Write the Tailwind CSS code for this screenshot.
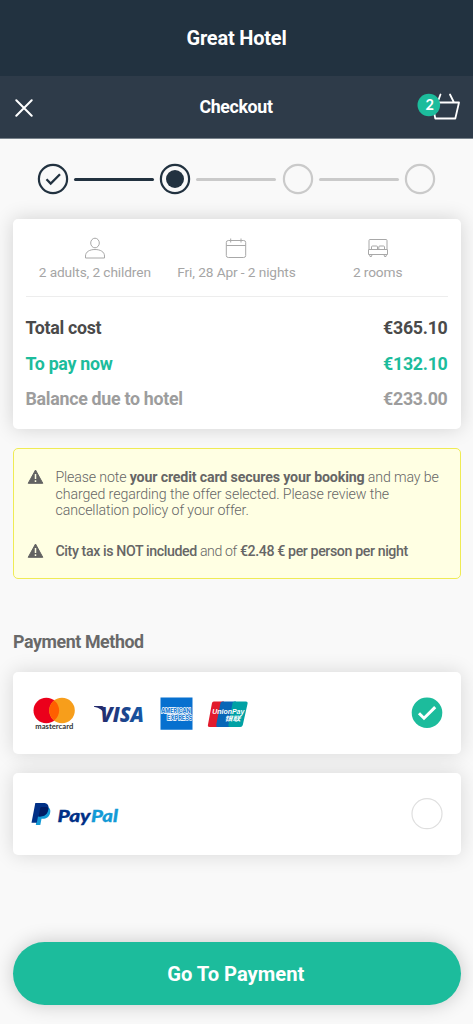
<!DOCTYPE html>
<html lang="en">
<head>
<meta charset="utf-8">
<meta name="viewport" content="width=device-width, initial-scale=1">
<title>Checkout</title>
<script src="https://cdn.jsdelivr.net/npm/@tailwindcss/browser@4"></script>
</head>
<body class="w-[473px] h-[1024px] overflow-hidden bg-[#f9f9f9] font-['Roboto',sans-serif] text-[#4a4a4a] flex flex-col">
<header class="h-[76px] shrink-0 bg-[#223240] flex items-center justify-center text-white font-bold text-[20px] tracking-[-0.2px]"><h1>Great Hotel</h1></header>
<nav class="h-[63px] shrink-0 bg-[#2e3b49] border-b border-[#78828b] flex items-center justify-between pl-[15px] pr-[13px] text-white">
  <svg class="w-[44px] h-[20px]" viewBox="0 0 44 20" fill="none" stroke="#fff" stroke-width="2" stroke-linecap="round"><path d="M1.3 3.3 16.7 18.7M16.7 3.3 1.3 18.7"/></svg>
  <h2 class="font-bold text-[17.8px] tracking-[-0.35px] pt-[1px] pr-[3px]">Checkout</h2>
  <svg class="w-[44px] h-[28px]" viewBox="0 0 44 28" fill="none"><path d="M20 9.5H43L39.3 25.5H19.3L16 9.5M24.5 1.5 21.5 9.5M34 1.5 38 9.5" stroke="#fff" stroke-width="1.8" stroke-linejoin="round" stroke-linecap="round"/><circle cx="12.8" cy="12" r="11.3" fill="#1cbc9c"/><text x="13.8" y="17.1" text-anchor="middle" fill="#fff" font-family="Lato" font-weight="700" font-size="14.5">2</text></svg>
</nav>
<main class="flex flex-col pl-[13px] pr-[12.5px]">
  <div class="flex items-center justify-between h-[32px] mt-[24px] pl-[23.5px] pr-[24.5px]">
    <svg class="size-[32px]" viewBox="0 0 32 32" fill="none" stroke="#223240" stroke-width="2.2"><circle cx="16" cy="16" r="14.1"/><path d="m9.5 16.2 4.2 4.3 9.3-9.3" stroke-width="2.3"/></svg>
    <div class="w-[80px] h-[3px] rounded-full bg-[#223240]"></div>
    <svg class="size-[32px]" viewBox="0 0 32 32" fill="none" stroke="#223240" stroke-width="2.2"><circle cx="16" cy="16" r="14.1"/><circle cx="16" cy="16" r="9" fill="#223240" stroke="none"/></svg>
    <div class="w-[80px] h-[3px] rounded-full bg-[#cacaca]"></div>
    <svg class="size-[32px]" viewBox="0 0 32 32" fill="none" stroke="#cacaca" stroke-width="2.2"><circle cx="16" cy="16" r="14.1"/></svg>
    <div class="w-[80px] h-[3px] rounded-full bg-[#cacaca]"></div>
    <svg class="size-[32px]" viewBox="0 0 32 32" fill="none" stroke="#cacaca" stroke-width="2.2"><circle cx="16" cy="16" r="14.1"/></svg>
  </div>
  <section class="mt-[24px] h-[210px] rounded-[5px] bg-white shadow-[0_0_20px_rgba(0,0,0,0.16)] pl-[12.5px] pr-[13px]">
    <div class="grid grid-cols-3 h-[78px] pt-[18px] border-b border-[#ededed] text-[13.7px] leading-[16px] tracking-[-0.11px] text-[#a5a5a5] whitespace-nowrap">
      <div class="flex flex-col items-center gap-[5px] pr-[2px]">
        <svg class="w-[22px] h-[22px]" viewBox="0 0 22 22" fill="none" stroke="#a8a8a8" stroke-width="1"><ellipse cx="11" cy="6" rx="4.3" ry="4.8"/><path d="M1.5 21V19C1.5 14.8 5.7 12.5 11 12.5S20.5 14.8 20.5 19V21Z"/></svg>
        <span>2 adults, 2 children</span>
      </div>
      <div class="flex flex-col items-center gap-[5px]">
        <svg class="w-[22px] h-[22px]" viewBox="0 0 22 22" fill="none" stroke="#a8a8a8" stroke-width="1"><rect x="1.3" y="3.5" width="19.4" height="17" rx="2"/><path d="M1.3 8.5H20.7M5.7 1.5V5.5M16 1.5V5.5"/></svg>
        <span>Fri, 28 Apr - 2 nights</span>
      </div>
      <div class="flex flex-col items-center gap-[5px] pl-[1px]">
        <svg class="w-[22px] h-[22px]" viewBox="0 0 22 22" fill="none" stroke="#a8a8a8" stroke-width="1"><path d="M2 12V3.5Q2 2.5 3 2.5H19Q20 2.5 20 3.5V12M1.5 12.5H20.5V17.5H1.5ZM4.5 12.5V10Q4.5 9 5.5 9H9.5Q10.5 9 10.5 10V12.5M11.8 12.5V10Q11.8 9 12.8 9H16.5Q17.5 9 17.5 10V12.5M2.5 17.5 3 19.5H4.5L5 17.5M17 17.5 17.5 19.5H19L19.5 17.5"/></svg>
        <span>2 rooms</span>
      </div>
    </div>
    <dl class="pt-[13.2px] text-[17.8px] leading-[35.4px] tracking-[-0.28px] font-bold">
      <div class="flex justify-between"><dt>Total cost</dt><dd>€365.10</dd></div>
      <div class="flex justify-between text-[#1cbc9c]"><dt>To pay now</dt><dd>€132.10</dd></div>
      <div class="flex justify-between text-[#9d9d9d]"><dt>Balance due to hotel</dt><dd>€233.00</dd></div>
    </dl>
  </section>
  <section class="mt-[19px] h-[131px] rounded-[5px] border-[1.5px] border-[#efeb55] bg-[#ffffe3] pl-[12.5px] pt-[20px] text-[14.2px] leading-[16.5px] text-[#666] whitespace-nowrap">
    <div class="flex gap-[12px]">
      <svg class="w-[17px] h-[16px] shrink-0" viewBox="0 0 17 16"><path d="M8.5 1 15.8 14.3H1.2Z" fill="#626262" stroke="#626262" stroke-linejoin="round"/><path d="M8.5 5V10M8.5 11.3V13" stroke="#ffffe3" stroke-width="1.5"/></svg>
      <p class="font-light tracking-[-0.1px]"><span class="tracking-[-0.15px]">Please note <b class="font-bold">your credit card secures your booking</b> and may be</span><br>charged regarding the offer selected. Please review the<br>cancellation policy of your offer.</p>
    </div>
    <div class="flex gap-[12px] mt-[24.5px]">
      <svg class="w-[17px] h-[16px] shrink-0" viewBox="0 0 17 16"><path d="M8.5 1 15.8 14.3H1.2Z" fill="#626262" stroke="#626262" stroke-linejoin="round"/><path d="M8.5 5V10M8.5 11.3V13" stroke="#ffffe3" stroke-width="1.5"/></svg>
      <p class="font-light tracking-[-0.4px]"><b class="font-medium">City tax is NOT included</b> and of <b class="font-medium">€2.48 € per person per night</b></p>
    </div>
  </section>
  <h3 class="mt-[52px] h-[22px] leading-[22px] text-[17.8px] tracking-[-0.4px] font-bold text-[#696969]">Payment Method</h3>
  <div class="mt-[19px] h-[82px] rounded-[5px] bg-white shadow-[0_0_20px_rgba(0,0,0,0.14)] flex items-center justify-between pl-[17px] pr-[18px]">
    <svg class="w-[220px] h-[38px]" viewBox="30 694 220 38">
      <defs><linearGradient id="visa"><stop stop-color="#242b6c"/><stop offset="1" stop-color="#1559a7"/></linearGradient><clipPath id="amex"><path d="M160.5 697.5H192.5V729.7H160.5Z"/></clipPath></defs>
      <circle cx="46.3" cy="710.5" r="12.8" fill="#eb001b"/><circle cx="62" cy="710.5" r="12.8" fill="#f79e1b"/><path d="M54.2 700.4A12.8 12.8 0 0 1 54.2 720.6A12.8 12.8 0 0 1 54.2 700.4" fill="#ff5f00"/>
      <text x="35.3" y="729" font-family="Lato" font-weight="700" font-size="6.8" fill="#333" textLength="38" lengthAdjust="spacingAndGlyphs">mastercard</text>
      <path d="M94 706H102Q103.5 706 103.9 707.5L105.5 715.2Q102 708 94 706.7Z" fill="#242b6c"/>
      <text x="100.5" y="721.5" font-family="Open Sans" font-weight="800" font-style="italic" font-size="21.8" fill="url(#visa)" textLength="43.5" lengthAdjust="spacingAndGlyphs">VISA</text>
      <path d="M160.5 697.5H192.5V729.7H160.5Z" fill="#0770cf"/>
      <g clip-path="url(#amex)" font-family="Inter" font-weight="700" font-size="6.1" fill="#0770cf" stroke="#fff" stroke-width="1.3" paint-order="stroke"><text x="161.2" y="713" textLength="29.5" lengthAdjust="spacingAndGlyphs">AMERICAN</text><text x="167" y="720.4" textLength="25.5" lengthAdjust="spacingAndGlyphs">EXPRESS</text></g>
      <path d="M213.8 701.5H224L218 727H209.5Q207.4 727 208 724.5L212 703Q212.3 701.5 213.8 701.5Z" fill="#e21b2d"/><path d="M222.5 701.5H236L230 727H217.5Q215.8 727 216.3 724.5L220.5 703Q220.8 701.5 222.5 701.5Z" fill="#0867b7"/><path d="M234.5 701.5H246Q248 701.5 247.6 703.5L242.8 725Q242.3 727 240.3 727H230Q228 727 228.5 724.5L232.5 703Q232.8 701.5 234.5 701.5Z" fill="#00a1a4"/>
      <text x="212.3" y="713.5" font-family="Liberation Sans" font-weight="700" font-style="italic" font-size="7" fill="#fff" textLength="32" lengthAdjust="spacingAndGlyphs">UnionPay</text>
      <text x="224.5" y="721.3" font-family="Noto Sans CJK SC" font-weight="700" font-style="italic" font-size="6.6" fill="#fff" textLength="16" lengthAdjust="spacingAndGlyphs">银联</text>
    </svg>
    <svg class="size-[32px]" viewBox="0 0 32 32"><circle cx="16" cy="15.7" r="15.3" fill="#1cbc9c"/><path d="m8 16.2 5 5L24.2 10.1" fill="none" stroke="#fff" stroke-width="3"/></svg>
  </div>
  <div class="mt-[19px] h-[82px] rounded-[5px] bg-white shadow-[0_0_20px_rgba(0,0,0,0.14)] flex items-center justify-between pl-[17px] pr-[18px]">
    <svg class="w-[92px] h-[28px]" viewBox="30 800 92 28">
      <path d="M38.8 806.5H46.5C50 807.5 51 810 50 813.5C49 817.2 46.3 818.7 42.8 818.7H41.5L40.3 825H35.8Z" fill="#139ad6"/>
      <path d="M35.3 803H43.5C47.5 803 49.3 805.5 48.4 809.5C47.4 814.5 44.5 816.4 40 816.4H38L36.8 822.7H31.5Z" fill="#003087"/><path d="M40.2 808Q40.4 807 41.5 807H46Q47.7 807.1 48.4 808.2C47.5 814.2 44.5 816.4 40 816.4H38.6Z" fill="#001c64"/>
      <g font-family="Lato" font-weight="900" font-style="italic" font-size="17.5" stroke-width="0.3"><text x="57.5" y="822" fill="#003087" stroke="#003087" textLength="33" lengthAdjust="spacingAndGlyphs">Pay</text><text x="91" y="822" fill="#139ad6" stroke="#139ad6" textLength="27" lengthAdjust="spacingAndGlyphs">Pal</text></g>
    </svg>
    <svg class="size-[32px]" viewBox="0 0 32 32"><circle cx="16" cy="15.7" r="15" fill="none" stroke="#dfdfdf" stroke-width="1.2"/></svg>
  </div>
  <button class="mt-[87px] h-[63px] shrink-0 rounded-full bg-[#1cbc9c] pt-[2px] pr-[2px] text-white font-bold text-[20.2px] shadow-[0_0_20px_rgba(0,0,0,0.2)]">Go To Payment</button>
</main>
</body>
</html>
